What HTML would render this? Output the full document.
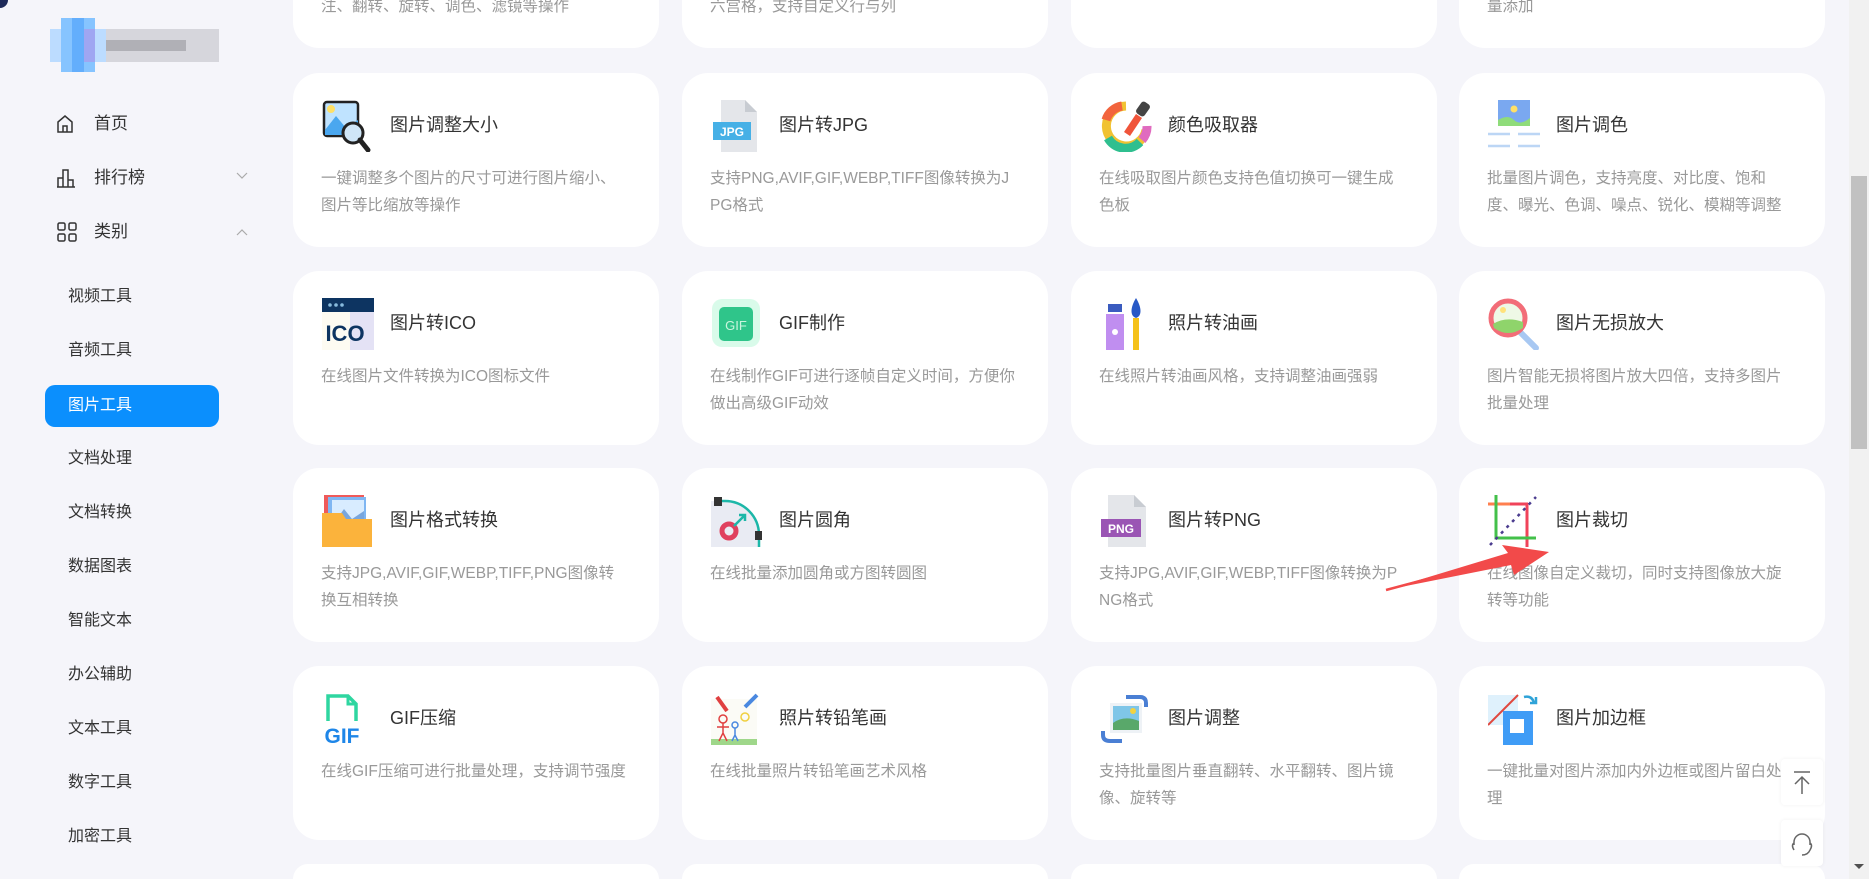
<!DOCTYPE html>
<html style="width:1869px;height:879px;overflow:hidden"><head><meta charset="utf-8"><style>
*{margin:0;padding:0;box-sizing:border-box}
body{width:1869px;height:879px;overflow:hidden;background:#f5f5fa;font-family:"Liberation Sans","Noto Sans CJK SC",sans-serif;position:relative}
.a{position:absolute}
.nav{position:absolute;left:94px;font-size:17px;color:#333;line-height:20px}
.sub{position:absolute;left:68px;font-size:16px;color:#333;line-height:20px}
.card{position:absolute;width:366px;height:174px;background:#fff;border-radius:26px}
.ic{position:absolute;left:29px;top:27px;width:52px;height:52px}
.t{position:absolute;left:97px;top:41px;font-size:18px;color:#333;white-space:nowrap;line-height:22px}
.d{position:absolute;left:28px;top:92px;font-size:15.5px;color:#999;line-height:27px;white-space:nowrap}
</style></head><body>
<div class="a" style="left:0;top:0;width:8px;height:8px;background:#1e2a5a;border-bottom-right-radius:8px"></div>
<div class="a" style="left:50px;top:29px;width:56px;height:33px;background:#bcdcff"></div>
<div class="a" style="left:61px;top:18px;width:34px;height:54px;background:#86c4ff"></div>
<div class="a" style="left:72px;top:18px;width:12px;height:54px;background:#63aefc"></div>
<div class="a" style="left:84px;top:29px;width:11px;height:33px;background:#9fa6f2"></div>
<div class="a" style="left:106px;top:29px;width:113px;height:33px;background:#d6d6dc"></div>
<div class="a" style="left:106px;top:40px;width:80px;height:11px;background:#b0b0b6"></div>
<svg class="a" style="left:56px;top:114px" width="18" height="20" viewBox="0 0 18 20"><path d="M2 8 L9 2 L16 8 V18 H2 Z M7 18 V12 H11 V18" fill="none" stroke="#333" stroke-width="1.5"/></svg>
<div class="nav" style="top:114px">首页</div>
<svg class="a" style="left:56px;top:168px" width="20" height="20" viewBox="0 0 20 20"><path d="M1 19 H19 M2 19 V10 H7 V19 M7 19 V2 H12 V19 M12 19 V12 H17 V19" fill="none" stroke="#333" stroke-width="1.5"/></svg>
<div class="nav" style="top:168px">排行榜</div>
<svg class="a" style="left:236px;top:172px" width="12" height="8"><path d="M1 1 L6 6 L11 1" fill="none" stroke="#aaa" stroke-width="1.2"/></svg>
<svg class="a" style="left:57px;top:222px" width="20" height="20" viewBox="0 0 20 20"><g fill="none" stroke="#333" stroke-width="1.5"><rect x="1" y="1" width="7" height="7" rx="1.5"/><rect x="12" y="1" width="7" height="7" rx="1.5"/><rect x="1" y="12" width="7" height="7" rx="1.5"/><rect x="12" y="12" width="7" height="7" rx="1.5"/></g></svg>
<div class="nav" style="top:222px">类别</div>
<svg class="a" style="left:236px;top:228px" width="12" height="8"><path d="M1 7 L6 2 L11 7" fill="none" stroke="#aaa" stroke-width="1.2"/></svg>
<div class="sub" style="top:287px">视频工具</div>
<div class="sub" style="top:341px">音频工具</div>
<div class="a" style="left:45px;top:385px;width:174px;height:42px;background:#0b8ffd;border-radius:10px"></div>
<div class="sub" style="top:396px;color:#fff">图片工具</div>
<div class="sub" style="top:449px">文档处理</div>
<div class="sub" style="top:503px">文档转换</div>
<div class="sub" style="top:557px">数据图表</div>
<div class="sub" style="top:611px">智能文本</div>
<div class="sub" style="top:665px">办公辅助</div>
<div class="sub" style="top:719px">文本工具</div>
<div class="sub" style="top:773px">数字工具</div>
<div class="sub" style="top:827px">加密工具</div>

<div class="card" style="left:293px;top:-126px"><div class="d" style="top:119px">注、翻转、旋转、调色、滤镜等操作</div></div>
<div class="card" style="left:682px;top:-126px"><div class="d" style="top:119px">六宫格，支持自定义行与列</div></div>
<div class="card" style="left:1071px;top:-126px"></div>
<div class="card" style="left:1459px;top:-126px"><div class="d" style="top:119px">量添加</div></div>

<div class="card" style="left:293px;top:73px">
<svg class="ic" viewBox="0 0 52 52"><rect x="2" y="2" width="34" height="34" rx="3" fill="#bfe3ff" stroke="#222" stroke-width="2.5"/><circle cx="9" cy="9" r="4" fill="#ffe066"/><path d="M3 30 L14 16 L24 28 L36 20 V35 H3Z" fill="#4aa7ef"/><circle cx="31" cy="33" r="10" fill="#cfe6f8" stroke="#222" stroke-width="3"/><path d="M38 40 L46 50" stroke="#222" stroke-width="5" stroke-linecap="round"/></svg>
<div class="t">图片调整大小</div><div class="d">一键调整多个图片的尺寸可进行图片缩小、<br>图片等比缩放等操作</div></div>
<div class="card" style="left:682px;top:73px">
<svg class="ic" viewBox="0 0 52 52"><path d="M10 0 H34 L46 12 V52 H10Z" fill="#e4e6ea"/><path d="M34 0 L46 12 H34Z" fill="#c8ccd2"/><rect x="2" y="22" width="38" height="18" fill="#46b0e6"/><text x="21" y="36" font-size="12" fill="#fff" text-anchor="middle" font-family="Liberation Sans" font-weight="bold">JPG</text></svg>
<div class="t">图片转JPG</div><div class="d">支持PNG,AVIF,GIF,WEBP,TIFF图像转换为J<br>PG格式</div></div>
<div class="card" style="left:1071px;top:73px">
<svg class="ic" viewBox="0 0 52 52"><path d="M26 6 A20 20 0 1 0 46 30" fill="none" stroke="#f1c232" stroke-width="9"/><path d="M8 38 A20 20 0 0 0 40 42" fill="none" stroke="#2fbf8f" stroke-width="9"/><path d="M6 20 A20 20 0 0 1 22 6" fill="none" stroke="#f2643d" stroke-width="9"/><path d="M42 40 A20 20 0 0 0 47 26" fill="none" stroke="#e06bbf" stroke-width="9"/><path d="M24 32 L36 14 L42 18 L30 36Z" fill="#f0543a"/><rect x="38" y="2" width="10" height="14" rx="3" fill="#444" transform="rotate(35 43 9)"/></svg>
<div class="t">颜色吸取器</div><div class="d">在线吸取图片颜色支持色值切换可一键生成<br>色板</div></div>
<div class="card" style="left:1459px;top:73px">
<svg class="ic" viewBox="0 0 52 52"><rect x="10" y="0" width="32" height="26" fill="#7aa8f0"/><path d="M10 20 Q20 14 26 20 T42 18 V26 H10Z" fill="#8fdc7a"/><circle cx="26" cy="9" r="3.5" fill="#ffe066"/><path d="M0 34 H22 M30 34 H52 M0 46 H22 M30 46 H52" stroke="#bcd6f5" stroke-width="2.5"/></svg>
<div class="t">图片调色</div><div class="d">批量图片调色，支持亮度、对比度、饱和<br>度、曝光、色调、噪点、锐化、模糊等调整</div></div>

<div class="card" style="left:293px;top:271px">
<svg class="ic" viewBox="0 0 52 52"><rect x="0" y="0" width="52" height="52" fill="#e4e2f5"/><rect x="0" y="0" width="52" height="14" fill="#0d3461"/><circle cx="8" cy="7" r="1.8" fill="#8bd"/><circle cx="14" cy="7" r="1.8" fill="#8bd"/><circle cx="20" cy="7" r="1.8" fill="#8bd"/><rect x="0" y="14" width="28" height="38" fill="#fdfbf2"/><text x="23" y="43" font-size="22" fill="#0d3461" text-anchor="middle" font-family="Liberation Sans" font-weight="bold">ICO</text></svg>
<div class="t">图片转ICO</div><div class="d">在线图片文件转换为ICO图标文件</div></div>
<div class="card" style="left:682px;top:271px">
<svg class="ic" viewBox="0 0 52 52"><rect x="1" y="1" width="48" height="48" rx="10" fill="#d9fbea"/><rect x="8" y="9" width="34" height="34" rx="5" fill="#2fc58a"/><text x="25" y="32" font-size="13" fill="#c9f5dd" text-anchor="middle" font-family="Liberation Sans">GIF</text></svg>
<div class="t">GIF制作</div><div class="d">在线制作GIF可进行逐帧自定义时间，方便你<br>做出高级GIF动效</div></div>
<div class="card" style="left:1071px;top:271px">
<svg class="ic" viewBox="0 0 52 52"><rect x="8" y="6" width="14" height="8" fill="#3a5bbf"/><path d="M6 16 H24 V52 H6Z" fill="#c08ef0"/><circle cx="15" cy="34" r="3" fill="#fff"/><path d="M36 0 C30 10 30 18 36 20 C42 18 42 10 36 0Z" fill="#2859c6"/><rect x="33" y="20" width="6" height="32" fill="#f5c21a"/></svg>
<div class="t">照片转油画</div><div class="d">在线照片转油画风格，支持调整油画强弱</div></div>
<div class="card" style="left:1459px;top:271px">
<svg class="ic" viewBox="0 0 52 52"><path d="M32 34 L48 50" stroke="#a8c8f2" stroke-width="6" stroke-linecap="round"/><circle cx="20" cy="20" r="17" fill="#eef9e6" stroke="#f26d78" stroke-width="5"/><path d="M5 26 Q18 18 35 24 V30 Q20 40 6 30Z" fill="#8fd46b"/><circle cx="15" cy="12" r="3" fill="#ffe27a"/></svg>
<div class="t">图片无损放大</div><div class="d">图片智能无损将图片放大四倍，支持多图片<br>批量处理</div></div>

<div class="card" style="left:293px;top:468px">
<svg class="ic" viewBox="0 0 52 52"><rect x="2" y="0" width="40" height="34" fill="#ef5a5a"/><rect x="6" y="2" width="38" height="32" fill="#7fb6f2"/><rect x="10" y="5" width="32" height="26" fill="#d8ecff"/><path d="M12 28 L22 14 L30 24 L42 16 V30 H12Z" fill="#79a6dd"/><path d="M0 18 H20 L24 24 H50 V52 H0Z" fill="#fbb33c"/></svg>
<div class="t">图片格式转换</div><div class="d">支持JPG,AVIF,GIF,WEBP,TIFF,PNG图像转<br>换互相转换</div></div>
<div class="card" style="left:682px;top:468px">
<svg class="ic" viewBox="0 0 52 52"><path d="M0 6 H14 A36 36 0 0 1 48 40 V52 H0Z" fill="#e9ebf3"/><path d="M6 6 H14 A34 34 0 0 1 48 40 V52" fill="none" stroke="#1cb7a8" stroke-width="2.5"/><rect x="3" y="2" width="8" height="9" fill="#333"/><rect x="44" y="36" width="7" height="9" fill="#333"/><circle cx="18" cy="36" r="7" fill="none" stroke="#e0405e" stroke-width="5"/><path d="M23 31 L34 20 M28 20 H34 V26" stroke="#1cb7a8" stroke-width="2.5" fill="none"/></svg>
<div class="t">图片圆角</div><div class="d">在线批量添加圆角或方图转圆图</div></div>
<div class="card" style="left:1071px;top:468px">
<svg class="ic" viewBox="0 0 52 52"><path d="M8 0 H34 L46 12 V52 H8Z" fill="#e4e6ea"/><path d="M34 0 L46 12 H34Z" fill="#c8ccd2"/><rect x="1" y="24" width="40" height="18" fill="#9a55b4"/><text x="21" y="38" font-size="12" fill="#fff" text-anchor="middle" font-family="Liberation Sans" font-weight="bold">PNG</text></svg>
<div class="t">图片转PNG</div><div class="d">支持JPG,AVIF,GIF,WEBP,TIFF图像转换为P<br>NG格式</div></div>
<div class="card" style="left:1459px;top:468px">
<svg class="ic" viewBox="0 0 52 52"><path d="M0 9 H40 M39 8 V52" stroke="#f0435a" stroke-width="3"/><path d="M0 9 H22" stroke="#ff7f4f" stroke-width="3"/><path d="M8 0 V43 H48" stroke="#43c04a" stroke-width="3" fill="none"/><path d="M2 50 L48 2" stroke="#4b3c8f" stroke-width="2.5" stroke-dasharray="3 5"/></svg>
<div class="t">图片裁切</div><div class="d">在线图像自定义裁切，同时支持图像放大旋<br>转等功能</div></div>

<div class="card" style="left:293px;top:666px">
<svg class="ic" viewBox="0 0 52 52"><path d="M6 28 V3 H26 L34 11 V28" fill="none" stroke="#2ed6a0" stroke-width="3.5"/><path d="M26 3 V11 H34" fill="none" stroke="#2ed6a0" stroke-width="3"/><text x="20" y="50" font-size="21" fill="#1e86e8" text-anchor="middle" font-family="Liberation Sans" font-weight="bold">GIF</text></svg>
<div class="t">GIF压缩</div><div class="d">在线GIF压缩可进行批量处理，支持调节强度</div></div>
<div class="card" style="left:682px;top:666px">
<svg class="ic" viewBox="0 0 52 52"><rect x="0" y="6" width="46" height="46" fill="#fbfbf6"/><rect x="0" y="46" width="46" height="6" fill="#9fd78a"/><path d="M6 4 L16 18" stroke="#e04040" stroke-width="4"/><path d="M34 14 L46 2" stroke="#4a88e0" stroke-width="4"/><circle cx="12" cy="26" r="4" fill="none" stroke="#e04040" stroke-width="1.5"/><path d="M12 30 V40 L8 48 M12 40 L16 48 M6 34 H18" stroke="#e04040" stroke-width="1.5" fill="none"/><circle cx="24" cy="32" r="3" fill="none" stroke="#4a88e0" stroke-width="1.5"/><path d="M24 35 V42 L21 48 M24 42 L27 48" stroke="#4a88e0" stroke-width="1.5" fill="none"/><circle cx="34" cy="24" r="4" fill="none" stroke="#f0d040" stroke-width="1.5"/></svg>
<div class="t">照片转铅笔画</div><div class="d">在线批量照片转铅笔画艺术风格</div></div>
<div class="card" style="left:1071px;top:666px">
<svg class="ic" viewBox="0 0 52 52"><rect x="10" y="10" width="32" height="30" fill="#eef2f6"/><rect x="13" y="13" width="26" height="24" fill="#7fc6e8"/><path d="M13 30 Q24 22 39 28 V37 H13Z" fill="#59a86a"/><circle cx="33" cy="18" r="3" fill="#f2d240"/><path d="M26 4 H40 Q46 4 46 10 V14" fill="none" stroke="#4a7fd4" stroke-width="4"/><path d="M3 38 V42 Q3 48 10 48 H22" fill="none" stroke="#4a7fd4" stroke-width="4"/></svg>
<div class="t">图片调整</div><div class="d">支持批量图片垂直翻转、水平翻转、图片镜<br>像、旋转等</div></div>
<div class="card" style="left:1459px;top:666px">
<svg class="ic" viewBox="0 0 52 52"><rect x="0" y="2" width="30" height="30" fill="#dff1fc"/><rect x="15" y="18" width="30" height="34" fill="#3f9cf6"/><rect x="22" y="26" width="14" height="14" fill="#fff"/><path d="M0 32 L30 2" stroke="#e0483f" stroke-width="2"/><path d="M36 4 Q44 2 46 10 M42 10 H48 V4" fill="none" stroke="#2fa3d8" stroke-width="2.5"/></svg>
<div class="t">图片加边框</div><div class="d">一键批量对图片添加内外边框或图片留白处<br>理</div></div>

<div class="card" style="left:293px;top:864px;height:15px;border-radius:26px 26px 0 0"></div>
<div class="card" style="left:682px;top:864px;height:15px;border-radius:26px 26px 0 0"></div>
<div class="card" style="left:1071px;top:864px;height:15px;border-radius:26px 26px 0 0"></div>
<div class="card" style="left:1459px;top:864px;height:15px;border-radius:26px 26px 0 0"></div>

<div class="a" style="left:1781px;top:759px;width:42px;height:46px;background:#fff;border-radius:4px;box-shadow:0 0 4px rgba(0,0,0,.06)"></div>
<svg class="a" style="left:1792px;top:771px" width="20" height="24"><path d="M2 1 H18 M10 23 V6 M3 13 L10 6 L17 13" fill="none" stroke="#666" stroke-width="1.5"/></svg>
<div class="a" style="left:1781px;top:820px;width:42px;height:46px;background:#fff;border-radius:4px;box-shadow:0 0 4px rgba(0,0,0,.06)"></div>
<svg class="a" style="left:1790px;top:831px" width="24" height="26"><path d="M4 14 V11 A8 8 0 0 1 20 11 V14 M4 12 Q1 14 4 19 M20 12 Q23 14 20 19 M20 19 Q18 24 12 24" fill="none" stroke="#666" stroke-width="1.5"/></svg>

<div class="a" style="left:1849px;top:0;width:20px;height:879px;background:#f1f1f1"></div>
<div class="a" style="left:1851px;top:176px;width:16px;height:273px;background:#c1c1c1"></div>
<svg class="a" style="left:1853px;top:863px" width="12" height="8"><path d="M1 1 H11 L6 6Z" fill="#505050"/></svg>

<svg class="a" style="left:0;top:0" width="1869" height="879"><path d="M1386 590 L1508 553 L1502 545 L1549 552 L1514 575 L1511 565 Z" fill="#f24a4a"/><path d="M1386 590 L1510 557" stroke="#f24a4a" stroke-width="2.5"/></svg>
</body></html>
